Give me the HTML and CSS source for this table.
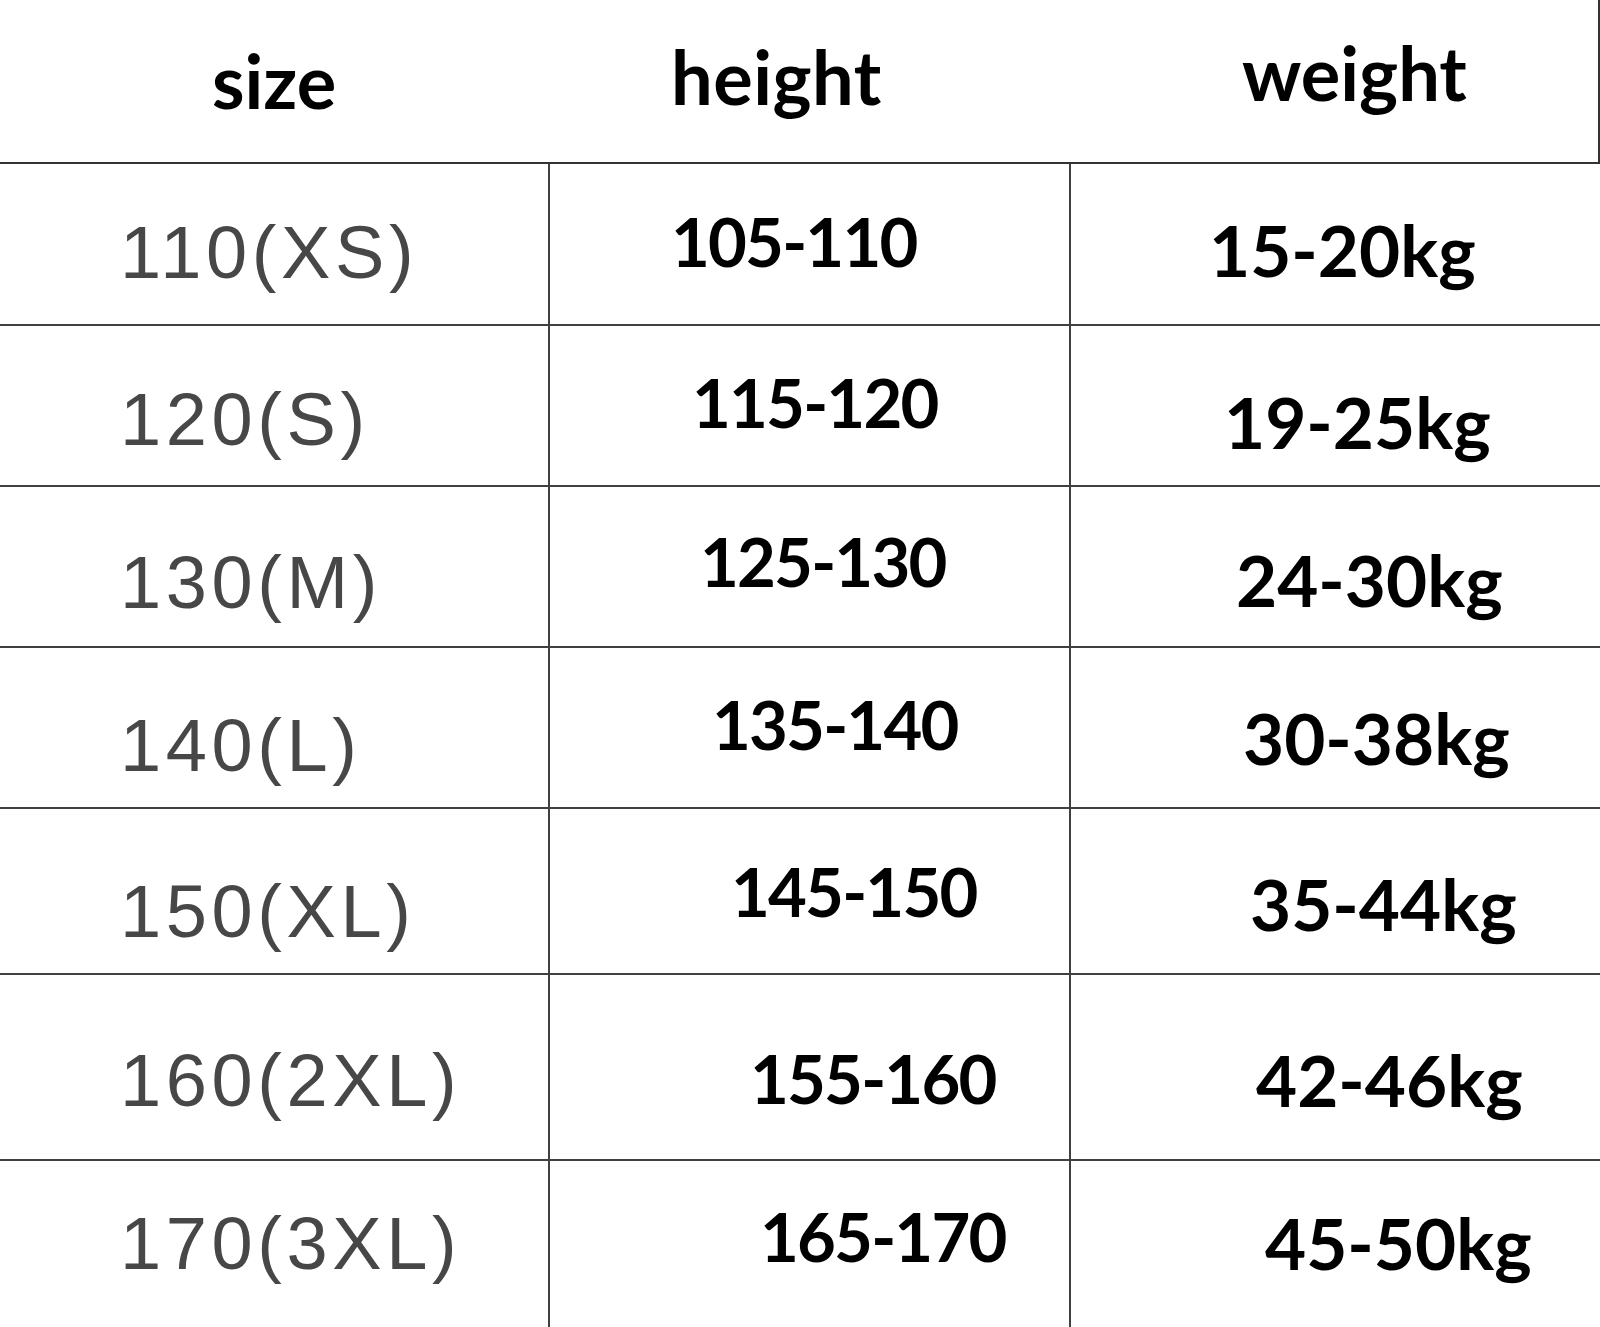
FILE: index.html
```html
<!DOCTYPE html>
<html lang="en">
<head>
<meta charset="utf-8">
<title>Size chart</title>
<link rel="stylesheet" href="styles.css">
</head>
<body>
<div class="chart">
  <div class="row head">
    <div class="cell">size</div>
    <div class="cell">height</div>
    <div class="cell">weight</div>
  </div>
  <div class="row r1">
    <div class="cell size">110(XS)</div>
    <div class="cell ht">105-110</div>
    <div class="cell wt">15-20kg</div>
  </div>
  <div class="row r2">
    <div class="cell size">120(S)</div>
    <div class="cell ht">115-120</div>
    <div class="cell wt">19-25kg</div>
  </div>
  <div class="row r3">
    <div class="cell size">130(M)</div>
    <div class="cell ht">125-130</div>
    <div class="cell wt">24-30kg</div>
  </div>
  <div class="row r4">
    <div class="cell size">140(L)</div>
    <div class="cell ht">135-140</div>
    <div class="cell wt">30-38kg</div>
  </div>
  <div class="row r5">
    <div class="cell size">150(XL)</div>
    <div class="cell ht">145-150</div>
    <div class="cell wt">35-44kg</div>
  </div>
  <div class="row r6">
    <div class="cell size">160(2XL)</div>
    <div class="cell ht">155-160</div>
    <div class="cell wt">42-46kg</div>
  </div>
  <div class="row r7">
    <div class="cell size">170(3XL)</div>
    <div class="cell ht">165-170</div>
    <div class="cell wt">45-50kg</div>
  </div>
</div>
</body>
</html>
```
FILE: styles.css
```css
html, body {
  margin: 0;
  padding: 0;
  background: #ffffff;
}

.chart {
  width: 1600px;
  height: 1327px;
  overflow: hidden;
}

.row {
  display: grid;
  grid-template-columns: 550px 521px 529px;
  box-sizing: border-box;
  border-bottom: 2px solid #404040;
}

.cell {
  box-sizing: border-box;
  white-space: nowrap;
  line-height: 1;
}

/* header */
.head {
  height: 164px;
  border-bottom: 2px solid #333333;
  border-right: 2px solid #333333;
  font-family: "Lato", "DejaVu Sans", sans-serif;
  font-weight: 700;
  font-size: 74px;
  color: #000000;
}
.head .cell:nth-child(1) { padding: 44px 0 0 212px; }
.head .cell:nth-child(2) { padding: 40px 0 0 121px; letter-spacing: 0.5px; }
.head .cell:nth-child(3) { padding: 36px 0 0 171px; }

/* body cells */
.row:not(.head) .cell:not(:last-child) {
  border-right: 2px solid #404040;
}

.size {
  font-family: "Liberation Sans", Arial, sans-serif;
  font-size: 74px;
  font-weight: 400;
  letter-spacing: 4.6px;
  color: #474747;
}

.ht {
  font-family: "Lato", "DejaVu Sans", sans-serif;
  font-size: 67px;
  font-weight: 700;
  letter-spacing: -1.8px;
  color: #000000;
}

.wt {
  font-family: "Lato", "DejaVu Sans", sans-serif;
  font-size: 71px;
  font-weight: 700;
  color: #000000;
}

.r1 { height: 162px; }
.r2 { height: 161px; }
.r3 { height: 161px; }
.r4 { height: 161px; }
.r5 { height: 166px; }
.r6 { height: 186px; }
.r7 { height: 166px; border-bottom: none; }

.r1 .size { padding: 52px 0 0 120px; }
.r2 .size { padding: 57px 0 0 120px; }
.r3 .size { padding: 59px 0 0 120px; }
.r4 .size { padding: 61px 0 0 120px; }
.r5 .size { padding: 66px 0 0 120px; }
.r6 .size { padding: 69px 0 0 120px; }
.r7 .size { padding: 46px 0 0 120px; }

.r1 .ht { padding: 44px 0 0 121px; }
.r2 .ht { padding: 43px 0 0 142px; }
.r3 .ht { padding: 41px 0 0 150px; }
.r4 .ht { padding: 43px 0 0 162px; }
.r5 .ht { padding: 49px 0 0 181px; }
.r6 .ht { padding: 70px 0 0 200px; }
.r7 .ht { padding: 42px 0 0 210px; }

.r1 .wt { padding: 50px 0 0 138px; }
.r2 .wt { padding: 60px 0 0 153px; }
.r3 .wt { padding: 57px 0 0 165px; }
.r4 .wt { padding: 54px 0 0 172px; }
.r5 .wt { padding: 59px 0 0 179px; }
.r6 .wt { padding: 69px 0 0 185px; }
.r7 .wt { padding: 46px 0 0 194px; }
```
